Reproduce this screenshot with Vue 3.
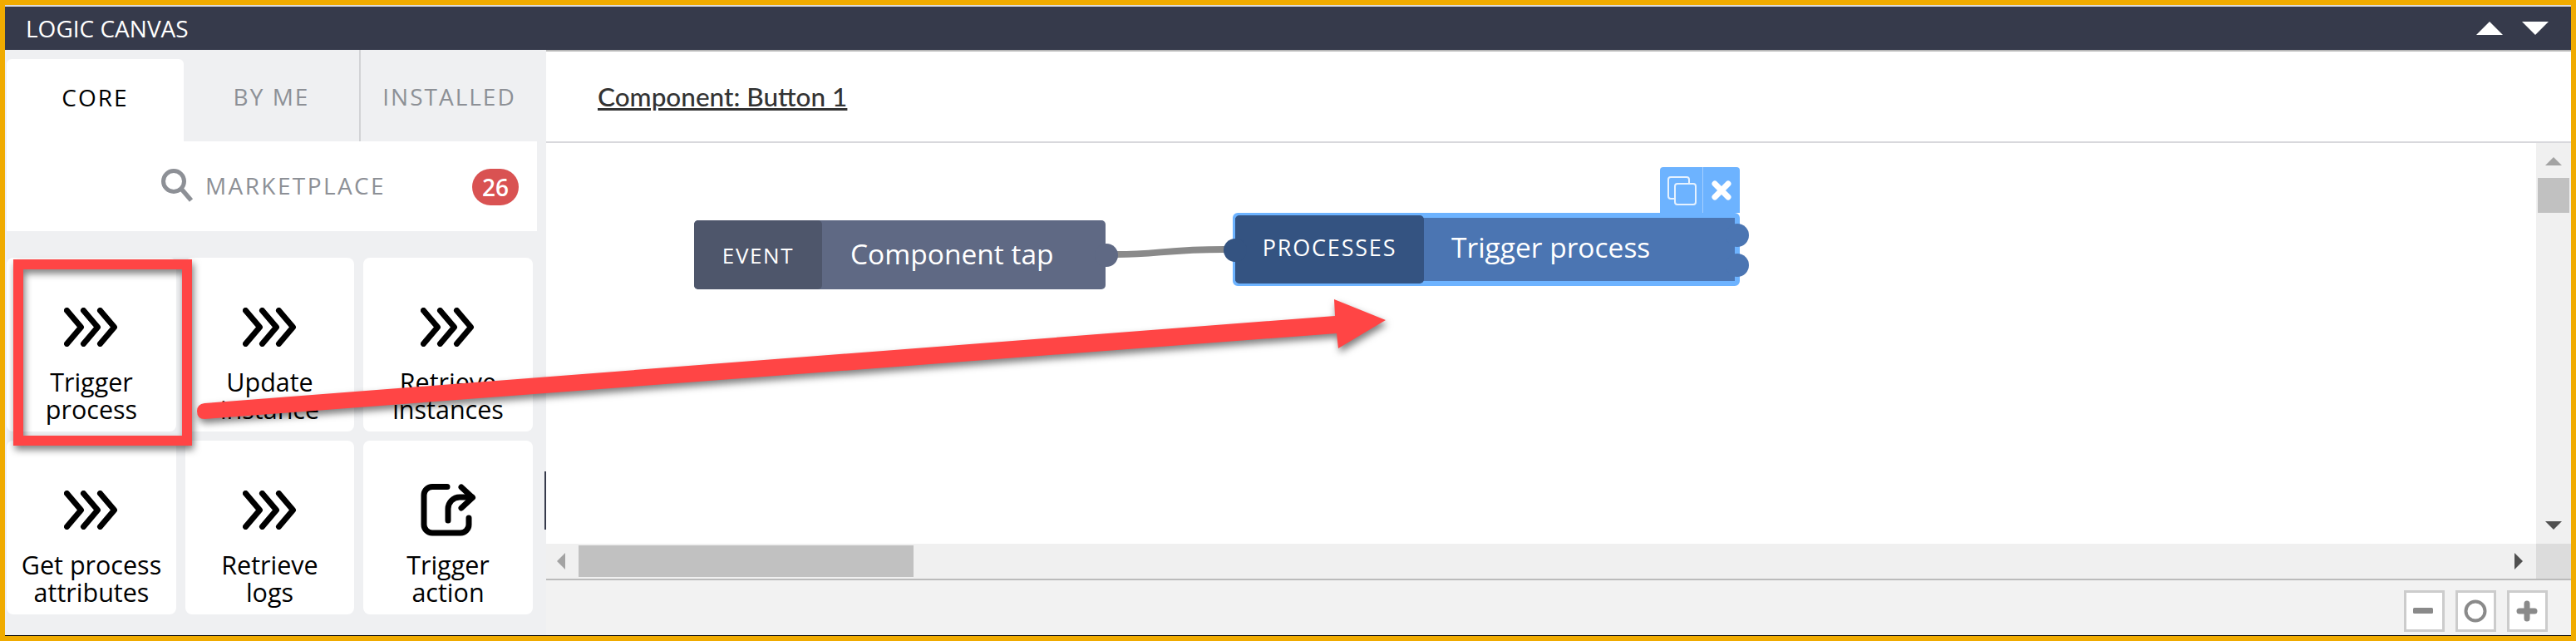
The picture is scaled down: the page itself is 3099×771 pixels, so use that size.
<template>
  <div class="page">
    <div class="frame">
      <header class="titlebar">
        <span class="title">LOGIC CANVAS</span>
        <div class="title-arrows">
          <span class="tri-up"></span>
          <span class="tri-down"></span>
        </div>
      </header>
      <div class="body">
        <aside class="panel">
          <div class="tabs">
            <div v-for="tab in tabs" :key="tab" :class="['tab', { active: tab === 'CORE' }]">{{ tab }}</div>
          </div>
          <div class="market">
            <svg class="search" width="40" height="40" viewBox="0 0 40 40" fill="none" stroke="#8d9096">
              <circle cx="15" cy="15" r="12.5" stroke-width="5" />
              <line x1="24" y1="24" x2="36" y2="38" stroke-width="5.5" />
            </svg>
            <span class="market-label">MARKETPLACE</span>
            <span class="badge">26</span>
          </div>
          <div class="cards">
            <div v-for="card in cards" :key="card.label" class="card">
              <div class="card-icon">
                <svg v-if="card.icon === 'chevrons'" width="66" height="47" viewBox="0 0 66 47" fill="none" stroke="#000" stroke-width="7" stroke-linecap="round" stroke-linejoin="round">
                  <path d="M3.5 3.5L20.5 23.5L3.5 43.5" />
                  <path d="M23.5 3.5L40.5 23.5L23.5 43.5" />
                  <path d="M43.5 3.5L60.5 23.5L43.5 43.5" />
                </svg>
                <svg v-else width="67" height="63" viewBox="0 0 67 63" fill="none" stroke="#000" stroke-width="7" stroke-linecap="round" stroke-linejoin="round">
                  <path d="M32 3.5H14a10 10 0 0 0 -10 10V49a10 10 0 0 0 10 10H48a10 10 0 0 0 10 -10V41" />
                  <path d="M33 44V30a14 14 0 0 1 14 -14H62" />
                  <path d="M49 4L62.5 16.5L49 29" />
                </svg>
              </div>
              <div class="card-label">{{ card.label }}</div>
            </div>
          </div>
        </aside>
        <main class="main">
          <div class="compbar"><span class="comp-name">Component: Button 1</span></div>
          <div class="canvas-row">
            <div class="canvas">
              <svg class="wire" width="140" height="20" viewBox="0 0 140 20" fill="none">
                <path d="M0 14C50 14 60 8 130 8" stroke="#8a8a8a" stroke-width="8" />
              </svg>
              <div class="node event">
                <div class="node-tag">EVENT</div>
                <div class="node-name">Component tap</div>
                <span class="knob knob-out"></span>
              </div>
              <div class="node process">
                <div class="node-tag">PROCESSES</div>
                <div class="node-name">Trigger process</div>
                <span class="knob knob-in"></span>
                <span class="knob knob-a"></span>
                <span class="knob knob-b"></span>
              </div>
              <div class="node-tools">
                <div class="tool">
                  <svg width="36" height="36" viewBox="0 0 36 36" fill="none" stroke="#e6f2ff" stroke-width="2">
                    <path d="M9 28H5a3 3 0 0 1 -3 -3V5a3 3 0 0 1 3 -3H24a3 3 0 0 1 3 3V10" />
                    <rect x="10" y="10" width="25" height="25" rx="3" />
                  </svg>
                </div>
                <div class="tool tool-x">
                  <svg width="24" height="24" viewBox="0 0 24 24" fill="none" stroke="#fff" stroke-width="7" stroke-linecap="round">
                    <path d="M4 4L20 20M20 4L4 20" />
                  </svg>
                </div>
              </div>
            </div>
            <div class="vscroll">
              <span class="arrow-up"></span>
              <span class="vthumb"></span>
              <span class="arrow-down"></span>
            </div>
          </div>
          <div class="hscroll-row">
            <div class="hscroll">
              <span class="arrow-left"></span>
              <span class="hthumb"></span>
              <span class="arrow-right"></span>
            </div>
            <div class="corner"></div>
          </div>
          <div class="zoombar">
            <button class="zoom-btn">
              <svg width="26" height="10" viewBox="0 0 26 10"><rect y="1" width="24" height="7" rx="1.5" fill="#8a8a8a" /></svg>
            </button>
            <button class="zoom-btn">
              <svg width="28" height="28" viewBox="0 0 28 28" fill="none"><circle cx="14" cy="14" r="11.5" stroke="#8a8a8a" stroke-width="4" /></svg>
            </button>
            <button class="zoom-btn">
              <svg width="26" height="26" viewBox="0 0 26 26" fill="none" stroke="#8a8a8a" stroke-width="7" stroke-linecap="round"><path d="M13 4V22M4 13H22" /></svg>
            </button>
          </div>
        </main>
      </div>
      <span class="edge-mark"></span>
    </div>
    <svg class="callout" width="3099" height="771" viewBox="0 0 3099 771" fill="none">
      <rect x="22" y="318" width="203" height="212" stroke="#ff4545" stroke-width="12" />
      <path d="M246 485L1606 380L1605 360L1667 385L1610 419L1608 401L246 504Q237 504 237 494.5Q237 486 246 485Z" fill="#ff4545" />
    </svg>
  </div>
</template>

<script setup>
const tabs = ['CORE', 'BY ME', 'INSTALLED']
const cards = [
  { label: 'Trigger process', icon: 'chevrons' },
  { label: 'Update instance', icon: 'chevrons' },
  { label: 'Retrieve instances', icon: 'chevrons' },
  { label: 'Get process attributes', icon: 'chevrons' },
  { label: 'Retrieve logs', icon: 'chevrons' },
  { label: 'Trigger action', icon: 'share' },
]
</script>

<style scoped>
.page {
  position: relative;
  width: 3099px;
  height: 771px;
  overflow: hidden;
  font-family: "Open Sans", sans-serif;
}
.frame {
  position: relative;
  box-sizing: border-box;
  width: 100%;
  height: 100%;
  display: flex;
  flex-direction: column;
  border: 6px solid #f0ab00;
  padding-top: 2px;
  padding-bottom: 1px;
  background: linear-gradient(#dcdcdc 2px, #000 2px);
}
.titlebar {
  flex: none;
  height: 52px;
  background: #363a4b;
  color: #fff;
  display: flex;
  align-items: center;
  justify-content: space-between;
  padding: 0 27px 0 25px;
}
.title {
  font-size: 28px;
}
.title-arrows {
  display: flex;
  gap: 23px;
}
.tri-up, .tri-down {
  width: 0;
  height: 0;
  border-left: 16px solid transparent;
  border-right: 16px solid transparent;
}
.tri-up { border-bottom: 16px solid #fff; }
.tri-down { border-top: 16px solid #fff; }
.body {
  flex: 1;
  display: flex;
  min-height: 0;
}
.panel {
  flex: none;
  box-sizing: border-box;
  width: 651px;
  padding-left: 2px;
  background: #eff0f2;
}
.tabs {
  height: 110px;
  display: flex;
}
.tab {
  box-sizing: border-box;
  width: 213px;
  display: flex;
  align-items: center;
  justify-content: center;
  padding-top: 2px;
  font-size: 28px;
  letter-spacing: 2px;
  color: #8d9096;
}
.tab:nth-child(2) {
  border-right: 2px solid #d2d3d6;
}
.tab:nth-child(3) {
  width: 223px;
  padding-right: 10px;
}
.tab.active {
  margin-top: 11px;
  padding-top: 0;
  padding-bottom: 8px;
  background: #fff;
  color: #000;
  border-radius: 6px 6px 0 0;
}
.market {
  box-sizing: border-box;
  width: 638px;
  height: 108px;
  background: #fff;
  display: flex;
  align-items: center;
  padding-left: 186px;
}
.search {
  margin-top: -2px;
}
.market-label {
  margin-left: 13px;
  margin-top: -2px;
  font-size: 28px;
  letter-spacing: 2.4px;
  color: #8d9096;
}
.badge {
  margin-left: auto;
  margin-right: 22px;
  margin-top: 2px;
  width: 56px;
  height: 44px;
  border-radius: 22px;
  background: #d95252;
  color: #fff;
  font-size: 28px;
  font-weight: 600;
  line-height: 44px;
  text-align: center;
}
.cards {
  padding-top: 32px;
  display: grid;
  grid-template-columns: 204px 203px 204px;
  grid-auto-rows: 209px;
  gap: 11px;
}
.card {
  background: #fff;
  border-radius: 8px;
  padding-top: 49px;
  box-sizing: border-box;
  display: flex;
  flex-direction: column;
  align-items: center;
}
.card-icon {
  height: 68px;
  display: flex;
  align-items: center;
  justify-content: center;
}
.card-label {
  margin-top: 16px;
  width: 180px;
  font-size: 30.5px;
  line-height: 33px;
  color: #000;
  text-align: center;
}
.main {
  flex: 1;
  min-width: 0;
  display: flex;
  flex-direction: column;
}
.compbar {
  flex: none;
  box-sizing: border-box;
  height: 112px;
  border-top: 2px solid #b8b8b8;
  border-bottom: 2px solid #d8d8dc;
  background: #fff;
  padding-left: 62px;
  display: flex;
  align-items: center;
}
.comp-name {
  font-family: Lato, sans-serif;
  font-size: 31.5px;
  font-weight: 500;
  color: #333;
  text-decoration: underline;
  text-decoration-thickness: 3px;
}
.canvas-row {
  flex: none;
  height: 482px;
  display: flex;
}
.canvas {
  position: relative;
  flex: 1;
  background: #fff;
}
.wire {
  position: absolute;
  left: 686px;
  top: 120px;
}
.node {
  position: absolute;
  box-sizing: border-box;
  display: flex;
  align-items: stretch;
  color: #fff;
}
.node-tag {
  display: flex;
  align-items: center;
  justify-content: center;
  font-size: 26px;
  border-radius: 5px;
}
.node-name {
  display: flex;
  align-items: center;
  font-size: 33.5px;
  padding-bottom: 3px;
}
.event {
  left: 178px;
  top: 93px;
  width: 495px;
  height: 83px;
  background: #5f6984;
  border-radius: 5px;
}
.event .node-tag {
  width: 154px;
  background: #4e566b;
  letter-spacing: 1.6px;
}
.event .node-name {
  padding-left: 34px;
}
.process {
  left: 826px;
  top: 84px;
  width: 610px;
  height: 88px;
  border: 3px solid #6db3ff;
  border-radius: 6px;
  background: #6db3ff linear-gradient(#4b75b2, #4b75b2) no-repeat 0 3px / 601px 76px;
}
.process .node-tag {
  box-sizing: border-box;
  width: 227px;
  height: 82px;
  padding-bottom: 5px;
  background: #345381;
  font-size: 27px;
  letter-spacing: 1.8px;
}
.process .node-name {
  box-sizing: border-box;
  padding-left: 33px;
  height: 78px;
}
.knob {
  position: absolute;
  width: 28px;
  height: 28px;
  border-radius: 50%;
}
.knob-out {
  right: -15px;
  top: 28px;
  background: #5f6984;
}
.knob-in {
  left: -14px;
  top: 28px;
  background: #345381;
}
.knob-a, .knob-b {
  right: -14px;
  background: #4b75b2;
}
.knob-a { top: 10px; }
.knob-b { top: 46px; }
.node-tools {
  position: absolute;
  left: 1340px;
  top: 29px;
  width: 96px;
  height: 55px;
  display: flex;
  background: #6db3ff;
  border-radius: 4px 4px 0 0;
}
.tool {
  flex: none;
  width: 51px;
  display: flex;
  align-items: center;
  justify-content: center;
  border-right: 1px solid #a4ceff;
}
.tool-x {
  width: 44px;
  border-right: none;
}
.vscroll {
  flex: none;
  width: 42px;
  background: #f0f0f0;
  position: relative;
}
.arrow-up, .arrow-down, .arrow-left, .arrow-right, .vthumb, .hthumb {
  position: absolute;
  width: 0;
  height: 0;
}
.arrow-up {
  left: 11px;
  top: 17px;
  border-left: 10px solid transparent;
  border-right: 10px solid transparent;
  border-bottom: 10px solid #a3a3a3;
}
.arrow-down {
  left: 11px;
  bottom: 17px;
  border-left: 10px solid transparent;
  border-right: 10px solid transparent;
  border-top: 10px solid #505050;
}
.vthumb {
  left: 2px;
  top: 42px;
  width: 38px;
  height: 42px;
  background: #c1c1c1;
}
.hscroll-row {
  flex: none;
  height: 44px;
  box-sizing: border-box;
  border-bottom: 2px solid #bbb;
  display: flex;
}
.hscroll {
  position: relative;
  flex: 1;
  background: #f0f0f0;
}
.corner {
  flex: none;
  width: 42px;
  background: #dcdcdc;
}
.arrow-left {
  left: 13px;
  top: 11px;
  border-top: 10px solid transparent;
  border-bottom: 10px solid transparent;
  border-right: 10px solid #a3a3a3;
}
.arrow-right {
  right: 16px;
  top: 11px;
  border-top: 10px solid transparent;
  border-bottom: 10px solid transparent;
  border-left: 10px solid #505050;
}
.hthumb {
  left: 39px;
  top: 2px;
  width: 403px;
  height: 38px;
  background: #c1c1c1;
}
.zoombar {
  flex: 1;
  background: #f2f2f2;
  display: flex;
  justify-content: flex-end;
  align-items: flex-start;
  gap: 12.5px;
  padding: 12px 28px 0 0;
}
.zoom-btn {
  box-sizing: border-box;
  width: 49.5px;
  height: 50px;
  padding: 0;
  background: #fff;
  border: 3px solid #ccc;
  display: flex;
  align-items: center;
  justify-content: center;
}
.edge-mark {
  position: absolute;
  left: 649px;
  top: 561px;
  width: 2px;
  height: 70px;
  background: #363a4b;
}
.callout {
  position: absolute;
  left: 0;
  top: 0;
  filter: drop-shadow(2px 5px 4px rgba(0, 0, 0, 0.5));
}
</style>
